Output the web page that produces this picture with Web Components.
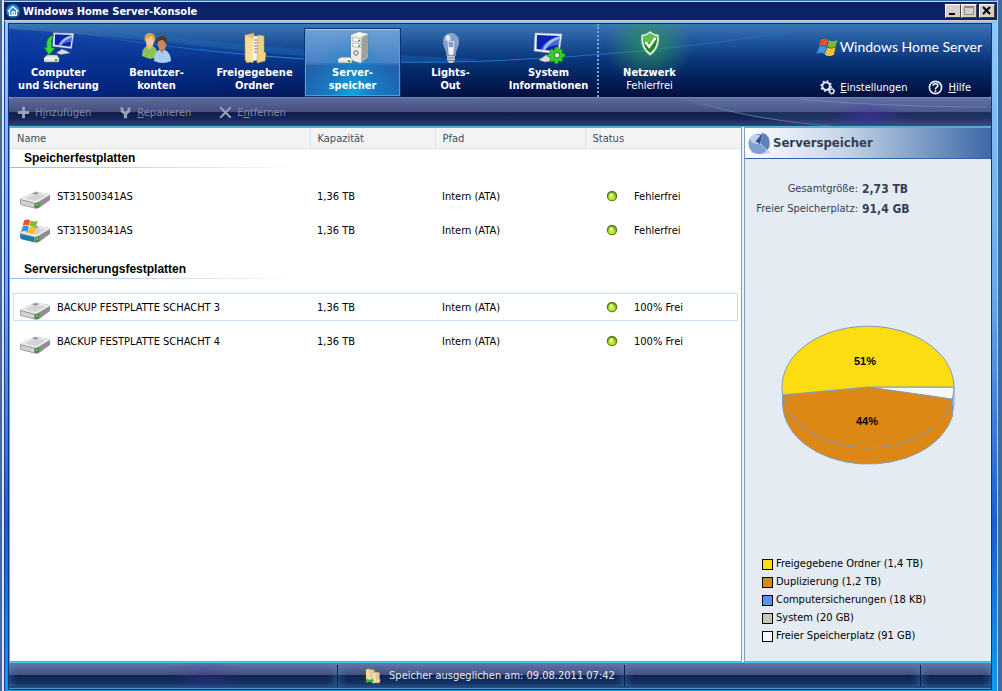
<!DOCTYPE html>
<html lang="de">
<head>
<meta charset="utf-8">
<title>Windows Home Server-Konsole</title>
<style>
    html, body {
        height: 100%;
    }

    body {
        margin: 0;
        overflow: hidden;
        background: #3c6ca0;
        font: 11px/13px "DejaVu Sans Condensed", "DejaVu Sans", sans-serif;
        color: #000;
    }
</style>
</head>
<body>
<home-console></home-console>

<script>
const flag = `
    <path d="M6 5 C9 3 12 3 15 5 L13 13 C10 11 7 11 4 13 Z" fill="#e8512a"/>
    <path d="M16 5 C19 7 22 7 26 5 L24 13 C21 15 17 15 14 13 Z" fill="#7dbb34"/>
    <path d="M4 14 C7 12 10 12 13 14 L11 22 C8 20 5 20 1 22 Z" fill="#3f96e0"/>
    <path d="M14 14 C17 16 20 16 24 14 L22 23 C18 25 14 25 11 23 Z" fill="#fcc02c"/>`;

const monitor = `
    <path d="M13 23 L19 25 L24 28 L12 30 L6 28 Z" fill="#d9dbe0" stroke="#8a909c" stroke-width=".6"/>
    <path d="M2 1 L29 2 L26 22 L1 19 Z" fill="#eceef2" stroke="#aab0bc" stroke-width=".6"/>
    <path d="M4 3 L27 4 L24.500 19.500 L3.500 17 Z" fill="#0c22b4"/>
    <path d="M27 4 L25.500 13 C19 13 14 16 11 18 L8 17.500 C11 11 17 7 27 4 Z" fill="#5f8cf0" opacity=".7"/>
    <path d="M27 4 L26.500 7 C20 9 15 13 12 18 L10 17.800 C12 11 18 6 27 4 Z" fill="#cfe0fc" opacity=".7"/>`;

const drive = `
    <path d="M1 18 L15 11 Q16 10.500 17 10.700 L30 13 Q31 13.500 31 15 L31 19 L20 27 Q18 28 16 27.500 L2 24 Q1 23.500 1 22 Z" fill="#8f8f92"/>
    <path d="M1 18 L15 11 Q16 10.500 17 10.700 L30 13 Q31 13.500 30 14.500 L18 21.500 Q17 22 15.500 21.700 Z" fill="#ececee"/>
    <path d="M6 17.500 L16 12.500 L27 14.500 L17 20 Z" fill="#d4d4d7"/>
    <path d="M13 12.500 L17 11 L20 12 L17 13.500 Z" fill="#8e8e92"/>
    <path d="M1.500 19 L15 22.500 L15 26.500 L2 23.200 Z" fill="#d2d2d5"/>
    <path d="M16.500 22.500 L20 21.500 L20 26 L16.500 27 Z" fill="#2f8a2c"/>
    <path d="M17.300 23.300 L19 22.800 L19 24.500 L17.300 25 Z" fill="#90e060"/>`;

const folder = `
    <path d="M6 3 L15 1 L15 29 L8 31 L6 28 Z" fill="#e9c36c" stroke="#b98c38" stroke-width=".6"/>
    <path d="M14 4 L20 4 L21 28 L13 29 Z" fill="#f6f6f4" stroke="#999" stroke-width=".5"/>
    <path d="M15 8h4M15 11h4M15 14h4M15 17h4M15 20h4" stroke="#7a7f8c"/>
    <path d="M6 3 L14 7 L14 31 L7 28 Z" fill="#f9e09a"/>
    <path d="M19 3 L25 4 L25 20 L27 21 L26 29 L18 31 Z" fill="#f2d284" stroke="#c49a48" stroke-width=".6"/>`;

const icons = {
    computer: `<g transform="translate(9 0) scale(.75)">${monitor}</g>
        <path d="M11 3 C4 5 3 10 4 16 L1 15 L6 23 L12 16 L9 16 C8 11 8 7 11 3 Z" fill="#3bdc34" stroke="#128a16" stroke-width=".7"/>
        <path d="M1 26 L4 23 L14 23 L16 26 L16 30 L1 30 Z" fill="#dfe1e3" stroke="#777" stroke-width=".6"/>
        <path d="M1 26.500 H16" stroke="#fff"/><rect x="12" y="27" width="2" height="2" fill="#2fae2c"/>`,
    users: `<path d="M1 24 Q1 16 6 14 L12 14 Q17 17 17 25 L9 27 Z" fill="#8bc455"/>
        <path d="M5 14 L9 18 L12 14 L11 11 H6 Z" fill="#e9b98a"/>
        <ellipse cx="9" cy="8" rx="4.500" ry="6" fill="#f2c99c"/>
        <path d="M4 10 C2 3 6 1 9 1 C13 1 15 4 14 9 C12 8 12 5 10 4 C8 6 6 6 5 7 Z" fill="#d8a43c"/>
        <path d="M13 29 Q13 20 18 18 L24 18 Q30 21 30 29 Q22 33 13 29 Z" fill="#a9ccf1"/>
        <path d="M18 17 L21 21 L24 17 V14 H18 Z" fill="#b5744a"/>
        <ellipse cx="21" cy="12" rx="4.500" ry="6" fill="#c98a5e"/>
        <path d="M16 12 C14 6 17 4 21 4 C26 4 27 8 25 13 C24 10 23 8 21 8 C19 8 17 9 16 12 Z" fill="#4c3930"/>`,
    folder,
    server: `<path d="M14 3 L22 0 L31 2 L31 25 L23 31 L14 28 Z" fill="#c4c4c2" stroke="#7b7b79" stroke-width=".6"/>
        <path d="M14 3 L25 4.500 L24 31 L14 28 Z" fill="#ededeb"/>
        <path d="M25 4.500 L31 2 L31 25 L24 31 Z" fill="#a9a9a6"/>
        <path d="M14 3 L22 0 L31 2 L25 4.500 Z" fill="#f8f8f6"/>
        <path d="M15.500 5.500 L24 6.500 V10 L15.500 9 Z M15.500 11 L24 12 V15.500 L15.500 14.500 Z" fill="#fff" stroke="#999" stroke-width=".6"/>
        <path d="M21 8.500h2M21 14h2" stroke="#31b02c" stroke-width="1.500"/>
        <circle cx="19" cy="21" r="2.300" fill="#ddd" stroke="#777"/>
        <path d="M26 6v20M28 5v20M30 4v18" stroke="#8b8b88" stroke-width=".6"/>
        <path d="M1 27 L4 25 H13 L15 27 V31 H1 Z" fill="#e3e3e1" stroke="#777" stroke-width=".6"/>
        <path d="M1 27.500 H15" stroke="#fff"/><rect x="11" y="28" width="2" height="2" fill="#2fae2c"/>`,
    bulb: `<path d="M12 24 C12 18 8 16 8 9.500 C8 4 12 1 16 1 C20 1 24 4 24 9.500 C24 16 20 18 20 24 Z" fill="#b9c7de" opacity=".65"/>
        <path d="M12 24 C12 18 9 16 9 9.500 C9 5 12 2 16 2 C20 2 23 5 23 9.500 C23 16 20 18 20 24" fill="none" stroke="#8fa3c6"/>
        <ellipse cx="13" cy="6" rx="2.500" ry="3" fill="#f4f7fc" opacity=".8"/>
        <path d="M12.500 9 Q14 11 16 9 Q18 11 19.500 9 M14 22 L13 10 M18 22 L19 10" fill="none" stroke="#eef" stroke-width=".9"/>
        <rect x="14" y="15" width="4" height="8" rx="1" fill="#f2f4f8"/>
        <path d="M12 24 H20 V28 L18 31 H14 L12 28 Z" fill="#c7c9cd"/>
        <path d="M12 26h8M12 28.500h8" stroke="#777b84" stroke-width=".8"/>`,
    system: `${monitor}
        <path d="M22.500 15 h3 l.5 3 2-1 2 2-1 2 3 .8 v3 l-3 .7 1.200 2.500-2 2-2.500-1.200-.8 3 h-3 l-.7-3-2.500 1.200-2-2 1.200-2.500-3-.7 v-3 l3-.8-1.200-2 2-2 2.500 1.200Z" fill="#35cf2c" stroke="#128016" stroke-width=".6"/>
        <circle cx="24" cy="23.200" r="2.800" fill="#e3ebe8" stroke="#168019"/>`,
    shield: `<g transform="translate(2 -2) scale(.88)">
        <path d="M16 1 Q20 5 26 5 Q28 21 16 29 Q4 21 6 5 Q12 5 16 1 Z" fill="#e3eee2" stroke="#71907a" stroke-width=".7"/>
        <path d="M16 4 Q20 7 24 7 Q25 19 16 26 Q7 19 8 7 Q12 7 16 4 Z" fill="#23882a"/>
        <path d="M16 4 Q12 7 8 7 Q7.500 12 9.500 16 Q16 15 24 9 L24 7 Q20 7 16 4 Z" fill="#5fc04c"/>
        <path d="M11 14 L15 19 L22 9" fill="none" stroke="#fff" stroke-width="2.800"/></g>`,
    drive,
    system_drive: `${drive}<path d="M1 19 L15 22 L15 27 L2 24 Z" fill="#1d7cae"/><g transform="translate(1 2) scale(.68)">${flag}</g>`,
    flag: `<g transform="translate(1 1) scale(1.100)">${flag}</g>`,
    add: `<path d="M16 2 V30 M2 16 H30" stroke="#9ba1b6" stroke-width="7"/>`,
    repair: `<path d="M4 2 L11 5 V11 L16 14 L21 11 V5 L28 2 V14 L20 21 V30 H12 V21 L4 14 Z" fill="#9ba1b6"/>`,
    remove: `<path d="M3 3 L29 29 M29 3 L3 29" stroke="#9ba1b6" stroke-width="5"/>`,
    gears: `<circle cx="13" cy="13" r="8" fill="none" stroke="#eef2fa" stroke-width="4"/>
        <circle cx="13" cy="13" r="11" fill="none" stroke="#eef2fa" stroke-width="3" stroke-dasharray="4 4.600"/>
        <circle cx="25" cy="24" r="4.500" fill="none" stroke="#d5deef" stroke-width="3"/>
        <circle cx="25" cy="24" r="6.500" fill="none" stroke="#d5deef" stroke-width="2" stroke-dasharray="2.500 2.600"/>`,
    help: `<circle cx="16" cy="16" r="13" fill="none" stroke="#eef2fa" stroke-width="3.500"/>
        <path d="M11 12.500 Q11 8 16 8 Q21 8 21 12 Q21 14 18 16 Q16 17 16 20" fill="none" stroke="#fff" stroke-width="3.200"/>
        <circle cx="16" cy="24" r="2" fill="#fff"/>`,
    house: `<circle cx="16" cy="16" r="16" fill="#1671b8"/><circle cx="16" cy="14" r="12" fill="#4aa5df" opacity=".5"/>
        <path d="M4 17 L16 6 L28 17 M8 15 V26 H24 V15 M14 26 V18 H19 V26" fill="none" stroke="#fff" stroke-width="2.800"/>`,
    chart: `<ellipse cx="17" cy="28" rx="13" ry="3" fill="#8796b4" opacity=".4"/>
        <circle cx="14" cy="17" r="13.500" fill="#7e9ed4"/>
        <ellipse cx="11" cy="11" rx="8" ry="6" fill="#cfdef5" opacity=".8"/>
        <path d="M16 17 L20 2 Q31 6 29 21 L26 26 Z" fill="#5d7fbe" stroke="#e9f0fb" stroke-width=".8"/>
        <path d="M20 2 L16 17 L10 14 Z" fill="#2f4f96"/>`,
    balance: `<g transform="translate(-3 0) scale(.85)">${folder}</g><g transform="translate(9 6) scale(.8)">${folder}</g>
        <path d="M1 26 L6 20 V23 H14 V20 L18 26 L13 31 V28 H6 V31 Z" fill="#35b52c"/>`,
    led: `<circle cx="16" cy="16" r="14" fill="#55801a"/><circle cx="16" cy="17" r="10.500" fill="#94c81d"/>
        <ellipse cx="15" cy="20" rx="8" ry="6" fill="#c5ec34"/><circle cx="14" cy="13" r="4.500" fill="#f5ffc9"/>`
};

class UiIcon extends HTMLElement {
    connectedCallback() {
        const size = this.getAttribute("size") || 32;
        this.attachShadow({mode: "open"}).innerHTML = `
        <style>
            :host { display: block; flex: none; width: ${size}px; height: ${size}px; }
            svg { display: block; width: 100%; height: 100%; overflow: visible; }
        </style>
        <svg viewBox="0 0 32 32" aria-hidden="true">${icons[this.getAttribute("name")]}</svg>`;
    }
}

class TitleBar extends HTMLElement {
    connectedCallback() {
        this.attachShadow({mode: "open"}).innerHTML = `
        <style>
            :host {
                display: flex;
                align-items: center;
                height: 18px;
                padding: 0 2px;
                background: #0a246a;
                border-top: 1px solid #d4d0c8;
                border-bottom: 1px solid #d4d0c8;
                color: #fff;
            }
            h1 { flex: 1; margin: 0 0 0 3px; font: inherit; font-weight: bold; }
            button {
                width: 16px;
                height: 14px;
                padding: 0;
                border: 1px solid;
                border-color: #fff #404040 #404040 #fff;
                background: #d4d0c8;
            }
            button:last-child { margin-left: 2px; }
            svg { display: block; width: 14px; height: 12px; }
        </style>
        <ui-icon name="house" size="14"></ui-icon>
        <h1><slot></slot></h1>
        <button aria-label="Minimieren"><svg viewBox="0 0 14 12"><path d="M3 9h6" stroke="#000" stroke-width="2"/></svg></button>
        <button aria-label="Maximieren"><svg viewBox="0 0 14 12"><path d="M2.500 1.500h9v8h-9zM2 2.500h10" fill="none" stroke="#908c84"/></svg></button>
        <button aria-label="Schließen"><svg viewBox="0 0 14 12"><path d="M3 2l7 7M10 2l-7 7" stroke="#000" stroke-width="2"/></svg></button>`;
    }
}

class NavTab extends HTMLElement {
    connectedCallback() {
        this.attachShadow({mode: "open"}).innerHTML = `
        <style>
            :host { display: flex; flex: 0 1 98px; min-width: 0; }
            button {
                display: flex;
                flex: 1;
                flex-direction: column;
                align-items: center;
                min-width: 0;
                margin: 5px 1px 1px 2px;
                padding: 2px 0 0;
                border: 1px solid transparent;
                background: none;
                color: #fff;
                font: inherit;
                font-weight: bold;
                white-space: nowrap;
            }
            span { margin-top: 2px; }
            :host([selected]) button {
                border-color: #a8ccf2 #5f9ad6 #49a0d8;
                background: radial-gradient(ellipse at 50% 100%, #12a4dc 0, #1189ca88 35%, transparent 65%),
                            linear-gradient(#6b9fd6, #4a82c6 50%, #2461ad 55%, #1c6cb8);
                box-shadow: 0 0 0 1px #0b3478;
            }
            :host([status]) { background: radial-gradient(ellipse 44px 42px at 50% 20px, #2f9a5ccc, transparent); }
            ::slotted(small) { font-size: 11px; font-weight: normal; }
        </style>
        <button><ui-icon name="${this.getAttribute("icon")}"></ui-icon><span><slot></slot></span></button>`;
    }
}

class ToolButton extends HTMLElement {
    connectedCallback() {
        this.attachShadow({mode: "open"}).innerHTML = `
        <style>
            :host { display: block; }
            button {
                display: flex;
                align-items: center;
                gap: 5px;
                padding: 0;
                border: 0;
                background: none;
                color: #8388a0;
                font: inherit;
            }
        </style>
        <button disabled><ui-icon name="${this.getAttribute("icon")}" size="13"></ui-icon><span><slot></slot></span></button>`;
    }
}

class HeaderLink extends HTMLElement {
    connectedCallback() {
        this.attachShadow({mode: "open"}).innerHTML = `
        <style>
            :host { display: block; }
            a { display: flex; align-items: center; gap: 5px; color: #fff; text-decoration: none; }
        </style>
        <a href="#"><ui-icon name="${this.getAttribute("icon")}" size="15"></ui-icon><span><slot></slot></span></a>`;
    }
}

class ConsoleHeader extends HTMLElement {
    connectedCallback() {
        this.attachShadow({mode: "open"}).innerHTML = `
        <style>
            :host {
                display: flex;
                height: 73px;
                position: relative;
                background: linear-gradient(#3c76b4, #20559c 24%, #0a3578 50%, #04205a 75%, #020f3c);
            }
            .glow { position: absolute; inset: 0; width: 100%; height: 100%; }
            nav { display: flex; flex: 1; position: relative; min-width: 0; }
            .line { flex: none; width: 1px; border-left: 2px dotted #7fa6cc; }
            .right {
                display: flex;
                flex-direction: column;
                align-items: flex-end;
                justify-content: space-between;
                position: relative;
                padding: 10px 9px 2px 0;
            }
            .logo { display: flex; align-items: center; gap: 1px; color: #fff; font: 14px/26px Lato, sans-serif; white-space: nowrap; }
            .links { display: flex; gap: 21px; padding: 0 11px 0 0; }
        </style>
        <svg class="glow" viewBox="0 0 980 73" preserveAspectRatio="none" aria-hidden="true">
            <defs>
                <linearGradient id="left"><stop stop-color="#0432a8" stop-opacity=".7"/><stop offset="1" stop-color="#0432a8" stop-opacity="0"/></linearGradient>
                <linearGradient id="arc"><stop stop-color="#1b7cd8" stop-opacity="0"/><stop offset=".3" stop-color="#2486e0"/><stop offset=".8" stop-color="#2486e0" stop-opacity=".6"/><stop offset="1" stop-color="#2486e0" stop-opacity="0"/></linearGradient>
            </defs>
            <path d="M0 5 Q150 14 480 60 L480 73 H0 Z" fill="url(#left)"/>
            <path d="M20 1 Q250 42 440 38 T830 0" fill="none" stroke="url(#arc)"/>
            <path d="M60 0 Q240 26 470 35 L440 39 Q240 36 60 0 Z" fill="#1c70cc" opacity=".35"/>
        </svg>
        <nav>
            <nav-tab icon="computer">Computer<br>und Sicherung</nav-tab>
            <nav-tab icon="users">Benutzer-<br>konten</nav-tab>
            <nav-tab icon="folder">Freigegebene<br>Ordner</nav-tab>
            <nav-tab icon="server" selected>Server-<br>speicher</nav-tab>
            <nav-tab icon="bulb">Lights-<br>Out</nav-tab>
            <nav-tab icon="system">System<br>Informationen</nav-tab>
            <span class="line"></span>
            <nav-tab icon="shield" status>Netzwerk<br><small>Fehlerfrei</small></nav-tab>
        </nav>
        <div class="right">
            <div class="logo"><ui-icon name="flag" size="24"></ui-icon>Windows Home Server</div>
            <div class="links">
                <header-link icon="gears"><u>E</u>instellungen</header-link>
                <header-link icon="help"><u>H</u>ilfe</header-link>
            </div>
        </div>`;
    }
}

class ToolBar extends HTMLElement {
    connectedCallback() {
        this.attachShadow({mode: "open"}).innerHTML = `
        <style>
            :host {
                display: flex;
                align-items: center;
                gap: 28px;
                position: relative;
                height: 28px;
                padding-left: 8px;
                border-top: 1px solid #7487b4;
                border-bottom: 1px solid #5cb0dc;
                border-radius: 3px 3px 0 0;
                background: linear-gradient(#5d6a9c, #454f80 50%, #101c48 52%, #17265a 75%, #33437a);
            }
            .glow { position: absolute; inset: 0; width: 100%; height: 100%; }
        </style>
        <svg class="glow" viewBox="0 0 980 28" preserveAspectRatio="none" aria-hidden="true">
            <defs>
                <radialGradient id="violet"><stop stop-color="#4a32a8" stop-opacity=".6"/><stop offset="1" stop-color="#4a32a8" stop-opacity="0"/></radialGradient>
                <linearGradient id="streak"><stop stop-color="#7fc4b0" stop-opacity="0"/><stop offset=".5" stop-color="#7fc4b0" stop-opacity=".6"/><stop offset="1" stop-color="#5c9ad0" stop-opacity=".5"/></linearGradient>
            </defs>
            <path d="M670 0 Q740 22 820 28 H980 V0 Z" fill="#7ea2d8" opacity=".12"/>
            <ellipse cx="858" cy="17" rx="40" ry="14" fill="url(#violet)"/>
            <path d="M670 0 Q740 22 820 28" fill="none" stroke="url(#streak)"/>
            <path d="M790 1 Q860 8 975 9" fill="none" stroke="#9fb4e0" opacity=".35"/>
        </svg>
        <slot></slot>`;
    }
}

class DiskTable extends HTMLElement {
    connectedCallback() {
        const row = (icon, name, status, mark = "") => `
            <tr class="${mark}">
                <td class="name"><div><ui-icon name="${icon}"></ui-icon><span>${name}</span></div></td>
                <td>1,36 TB</td>
                <td>Intern (ATA)</td>
                <td><div class="status"><ui-icon name="led" size="12"></ui-icon>${status}</div></td>
            </tr>`;

        this.attachShadow({mode: "open"}).innerHTML = `
        <style>
            :host { display: block; flex: 1; min-width: 0; border: 1px solid #7f9db9; background: #fff; }
            table { width: 100%; border-collapse: collapse; table-layout: fixed; }
            th {
                height: 20px;
                padding: 0 7px;
                border-right: 1px solid #e2e2e2;
                border-bottom: 1px solid #e2e2e2;
                background: #f3f3f3;
                color: #3d4c69;
                font-weight: normal;
                text-align: left;
            }
            th:last-child { border-right: 0; }
            td { height: 34px; padding: 0 7px; white-space: nowrap; }
            td.name { padding-left: 9px; }
            .name div { display: flex; align-items: center; gap: 6px; }
            .name ui-icon { margin-top: 2px; }
            .status { display: flex; align-items: center; gap: 16px; padding-left: 14px; }
            .selected { outline: 1px solid #c9dcf6; outline-offset: -4px; }
            .group td { height: 30px; padding: 0; vertical-align: top; }
            .group.next td { padding-top: 13px; }
            .group h2 {
                width: 276px;
                margin: 0;
                padding: 3px 0 2px 14px;
                border-bottom: 1px solid;
                border-image: linear-gradient(90deg, #8cbcf0, #fff) 1;
                font: bold 12px/13px "Liberation Sans", sans-serif;
            }
        </style>
        <table>
            <colgroup><col><col style="width:125px"><col style="width:150px"><col style="width:156px"></colgroup>
            <thead><tr><th>Name</th><th>Kapazität</th><th>Pfad</th><th>Status</th></tr></thead>
            <tbody>
                <tr class="group"><td colspan="4"><h2>Speicherfestplatten</h2></td></tr>
                ${row("drive", "ST31500341AS", "Fehlerfrei")}
                ${row("system_drive", "ST31500341AS", "Fehlerfrei")}
            </tbody>
            <tbody>
                <tr class="group next"><td colspan="4"><h2>Serversicherungsfestplatten</h2></td></tr>
                ${row("drive", "BACKUP FESTPLATTE SCHACHT 3", "100% Frei", "selected")}
                ${row("drive", "BACKUP FESTPLATTE SCHACHT 4", "100% Frei")}
            </tbody>
        </table>`;
    }
}

class StorageChart extends HTMLElement {
    connectedCallback() {
        this.attachShadow({mode: "open"}).innerHTML = `
        <style>
            :host { display: block; }
            svg { display: block; width: 174px; height: 142px; }
            text { font: bold 11px "Liberation Sans", sans-serif; text-anchor: middle; }
        </style>
        <svg viewBox="0 0 174 142" role="img" aria-label="Speicherbelegung">
            <g stroke="#7f9db9" stroke-linejoin="round">
                <path d="M171 74 L173 62 V79 L171 91 Z" fill="#e9edf2"/>
                <path d="M1.500 70 V80 A86 61 0 0 0 171.500 91 V74 Z" fill="#dd8714"/>
                <path d="M87 62 L1.700 70 A86 61 0 0 0 171.300 74 Z" fill="#dd8714"/>
                <path d="M87 62 L171.300 74 A86 61 0 0 0 173 62 Z" fill="#f8f8f8"/>
                <path d="M87 62 H173 A86 61 0 1 0 1.700 70 Z" fill="#fbdd12"/>
            </g>
            <text x="84" y="40">51%</text>
            <text x="86" y="100">44%</text>
        </svg>`;
    }
}

class LegendItem extends HTMLElement {
    connectedCallback() {
        this.attachShadow({mode: "open"}).innerHTML = `
        <style>
            :host { display: flex; align-items: center; gap: 3px; height: 18px; }
            i { width: 9px; height: 9px; margin-top: 2px; border: 1px solid #000; background: ${this.getAttribute("color")}; }
        </style>
        <i></i><span><slot></slot></span>`;
    }
}

class StoragePanel extends HTMLElement {
    connectedCallback() {
        this.attachShadow({mode: "open"}).innerHTML = `
        <style>
            :host {
                display: flex;
                flex: none;
                flex-direction: column;
                width: 246px;
                border: 1px solid #7f9db9;
                border-right: 0;
                background: #e4ebf3;
                color: #000;
            }
            header {
                display: flex;
                align-items: center;
                gap: 1px;
                height: 30px;
                padding-left: 3px;
                border-bottom: 1px solid #3464a8;
                background: linear-gradient(90deg, #fff, #c5d5e8 40%, #3c69a8);
                color: #333f57;
            }
            h2 { margin: 0; font-size: 13px; line-height: 16px; }
            dl {
                display: grid;
                grid-template-columns: 113px 1fr;
                column-gap: 4px;
                margin: 20px 0 0;
                color: #333f57;
                line-height: 20px;
                white-space: nowrap;
            }
            dt { text-align: right; }
            dd { margin: 0; font-size: 12px; font-weight: bold; }
            .chart { display: flex; flex: 1; align-items: center; justify-content: center; padding-top: 18px; }
            .legend { padding: 0 0 17px 17px; }
        </style>
        <header><ui-icon name="chart" size="24"></ui-icon><h2>Serverspeicher</h2></header>
        <dl>
            <dt>Gesamtgröße:</dt><dd>2,73 TB</dd>
            <dt>Freier Speicherplatz:</dt><dd>91,4 GB</dd>
        </dl>
        <div class="chart"><storage-chart></storage-chart></div>
        <div class="legend">
            <legend-item color="#fbdd12">Freigegebene Ordner (1,4 TB)</legend-item>
            <legend-item color="#dd8714">Duplizierung (1,2 TB)</legend-item>
            <legend-item color="#5a93f5">Computersicherungen (18 KB)</legend-item>
            <legend-item color="#c6c9ba">System (20 GB)</legend-item>
            <legend-item color="#f8f8f8">Freier Speicherplatz (91 GB)</legend-item>
        </div>`;
    }
}

class StatusBar extends HTMLElement {
    connectedCallback() {
        this.attachShadow({mode: "open"}).innerHTML = `
        <style>
            :host {
                display: grid;
                grid-template-columns: 328fr 287fr 295fr 70fr;
                height: 25px;
                border-top: 1px solid #4cc4f4;
                border-bottom: 1px solid #5d8cc0;
                background: radial-gradient(ellipse 36px 24px at 20% 60%, #40349855, transparent),
                            linear-gradient(#6478a8, #43507f 46%, #10224e 50%, #123264 80%, #2a4f84);
                color: #e4edf8;
            }
            div {
                display: flex;
                align-items: center;
                justify-content: center;
                gap: 8px;
                margin: 2px 0;
                border-right: 1px solid #0a1c48;
                box-shadow: inset 8px 0 8px -6px #4a9ac866, inset -8px 0 8px -6px #4a9ac866;
            }
            .message { padding-left: 18px; }
            div:last-child { border-right: 0; }
        </style>
        <div></div>
        <div class="message"><ui-icon name="balance" size="16"></ui-icon><span><slot></slot></span></div>
        <div></div>
        <div></div>`;
    }
}

class HomeConsole extends HTMLElement {
    connectedCallback() {
        this.attachShadow({mode: "open"}).innerHTML = `
        <style>
            :host {
                display: flex;
                flex-direction: column;
                box-sizing: border-box;
                height: 100vh;
                margin: 0 4px 0 0;
                padding: 1px 0 0 4px;
                border-right: 1px solid #c8c8c4;
                background: linear-gradient(90deg, #466a9c 2px, #dfe6ee 2px 4px, transparent 4px);
            }
            .frame {
                display: flex;
                flex: 1;
                flex-direction: column;
                min-height: 0;
                padding: 3px 6px 2px 4px;
                border-left: 1px solid #1b3ca0;
                background: linear-gradient(#8cc8fa, #6aa8ea 40%, #1c5cd8 75%, #0a9cf4);
            }
            .content {
                display: flex;
                flex: 1;
                flex-direction: column;
                min-height: 0;
                outline: 1px solid #12367c;
            }
            .main { display: flex; flex: 1; gap: 2px; min-height: 0; background: #eef3f8; }
        </style>
        <title-bar>Windows Home Server-Konsole</title-bar>
        <div class="frame">
            <div class="content">
                <console-header></console-header>
                <tool-bar>
                    <tool-button icon="add">H<u>i</u>nzufügen</tool-button>
                    <tool-button icon="repair"><u>R</u>eparieren</tool-button>
                    <tool-button icon="remove">E<u>n</u>tfernen</tool-button>
                </tool-bar>
                <div class="main">
                    <disk-table></disk-table>
                    <storage-panel></storage-panel>
                </div>
                <status-bar>Speicher ausgeglichen am: 09.08.2011 07:42</status-bar>
            </div>
        </div>`;
    }
}

customElements.define("ui-icon", UiIcon);
customElements.define("title-bar", TitleBar);
customElements.define("nav-tab", NavTab);
customElements.define("tool-button", ToolButton);
customElements.define("header-link", HeaderLink);
customElements.define("console-header", ConsoleHeader);
customElements.define("tool-bar", ToolBar);
customElements.define("disk-table", DiskTable);
customElements.define("storage-chart", StorageChart);
customElements.define("legend-item", LegendItem);
customElements.define("storage-panel", StoragePanel);
customElements.define("status-bar", StatusBar);
customElements.define("home-console", HomeConsole);
</script>
</body>
</html>
